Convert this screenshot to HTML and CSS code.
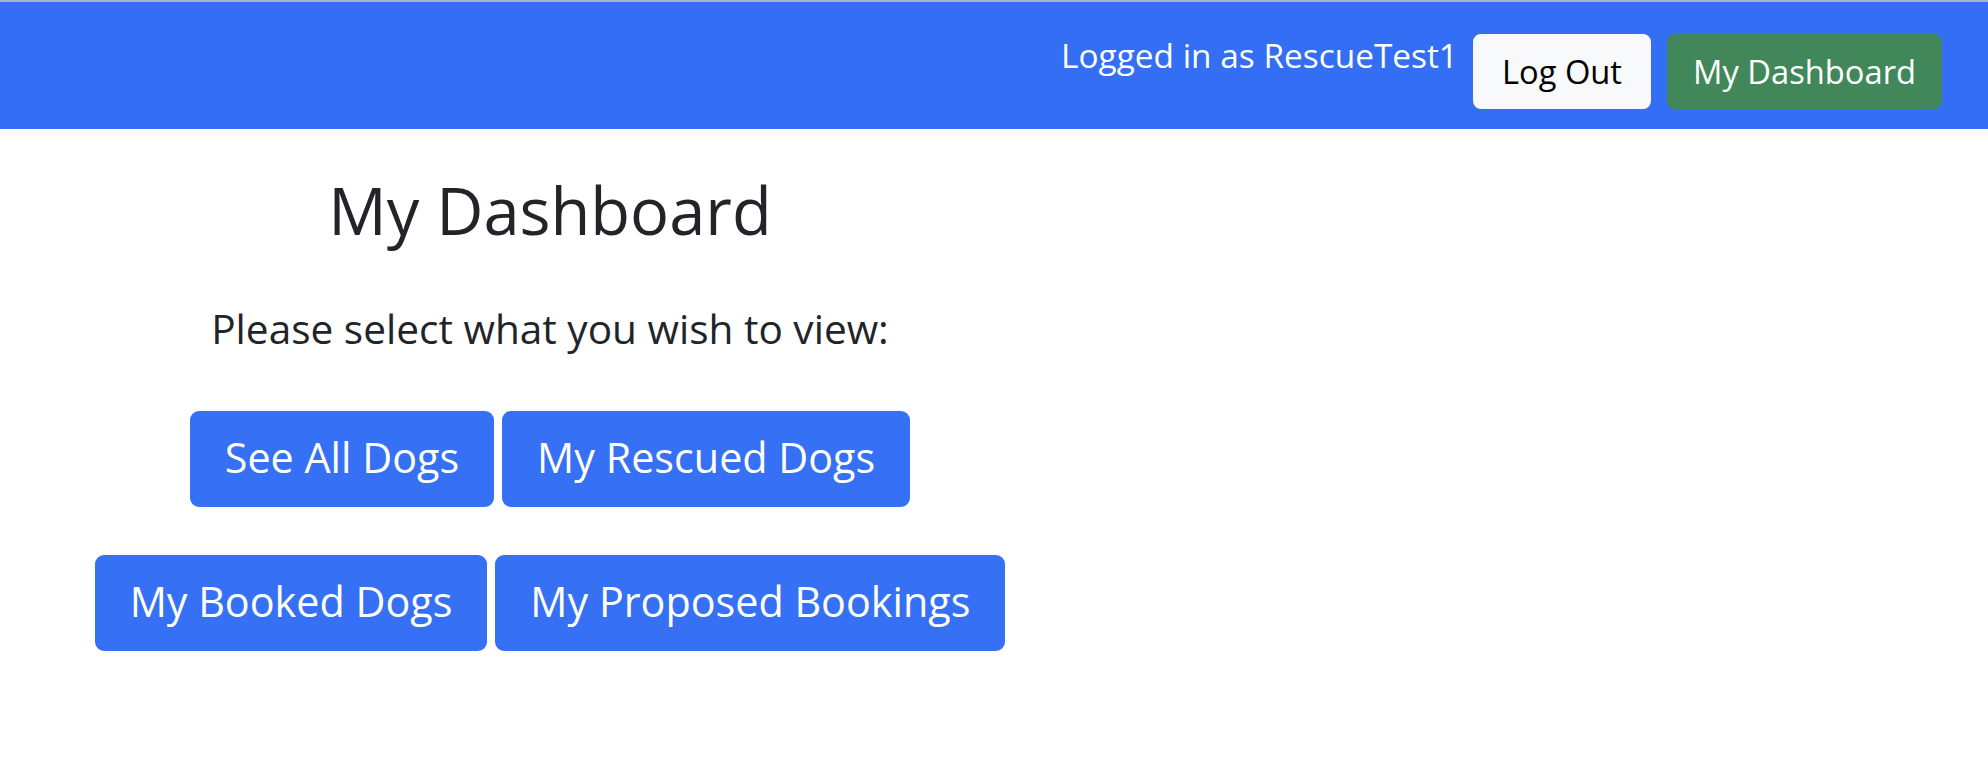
FILE: index.html
```html
<!DOCTYPE html>
<html lang="en">
<head>
<meta charset="utf-8">
<title>My Dashboard</title>
<link rel="stylesheet" href="styles.css">
</head>
<body>
<div class="topline"></div>
<nav class="navbar">
  <span class="nav-text">Logged in as RescueTest1</span>
  <a class="btn btn-light">Log Out</a>
  <a class="btn btn-success">My Dashboard</a>
</nav>
<main class="dashboard">
  <h2 class="title">My Dashboard</h2>
  <p class="lead">Please select what you wish to view:</p>
  <div class="btn-row row-first">
    <a class="btn btn-lg btn-primary">See All Dogs</a>
    <a class="btn btn-lg btn-primary">My Rescued Dogs</a>
  </div>
  <div class="btn-row row-second">
    <a class="btn btn-lg btn-primary">My Booked Dogs</a>
    <a class="btn btn-lg btn-primary">My Proposed Bookings</a>
  </div>
</main>
</body>
</html>
```
FILE: styles.css
```css
* { box-sizing: border-box; }
body {
  margin: 0;
  font-family: "Open Sans", sans-serif;
  color: #212529;
  background: #fff;
}
.topline { height: 2px; background: #a5b6c7; }
.navbar {
  display: flex;
  justify-content: flex-end;
  align-items: flex-start;
  padding: 32px 46px 20px 32px;
  background: #336ef5;
}
.nav-text {
  color: #fff;
  font-size: 33.4px;
  line-height: 33px;
  padding-top: 5px;
  margin-right: 15px;
  white-space: nowrap;
}
.btn {
  display: inline-block;
  border: 2px solid transparent;
  border-radius: 8px;
  font-size: 32.7px;
  line-height: 47px;
  padding: 12px 24px;
  text-align: center;
  white-space: nowrap;
}
.btn-light {
  background: #f8f9fa;
  border-color: #f8f9fa;
  color: #000;
  padding-left: 27px;
  padding-right: 27px;
}
.btn-success { background: #41875a; border-color: #41875a; color: #fff; margin-left: 16px; }
.btn-lg {
  font-size: 41.3px;
  line-height: 60px;
  padding: 14px 33px 18px;
  border-radius: 9px;
}
.btn-primary { background: #3570f5; border-color: #3570f5; color: #fff; }
.dashboard {
  width: 1100px;
  display: flex;
  flex-direction: column;
  align-items: center;
  text-align: center;
}
.title {
  margin: 43px 0 0;
  font-size: 65px;
  line-height: 76px;
  font-weight: 400;
}
.lead {
  margin: 56px 0 0;
  font-size: 40.6px;
  line-height: 50px;
}
.btn-row { display: flex; gap: 8px; justify-content: center; }
.row-first { margin-top: 57px; }
.row-second { margin-top: 48px; }
```
